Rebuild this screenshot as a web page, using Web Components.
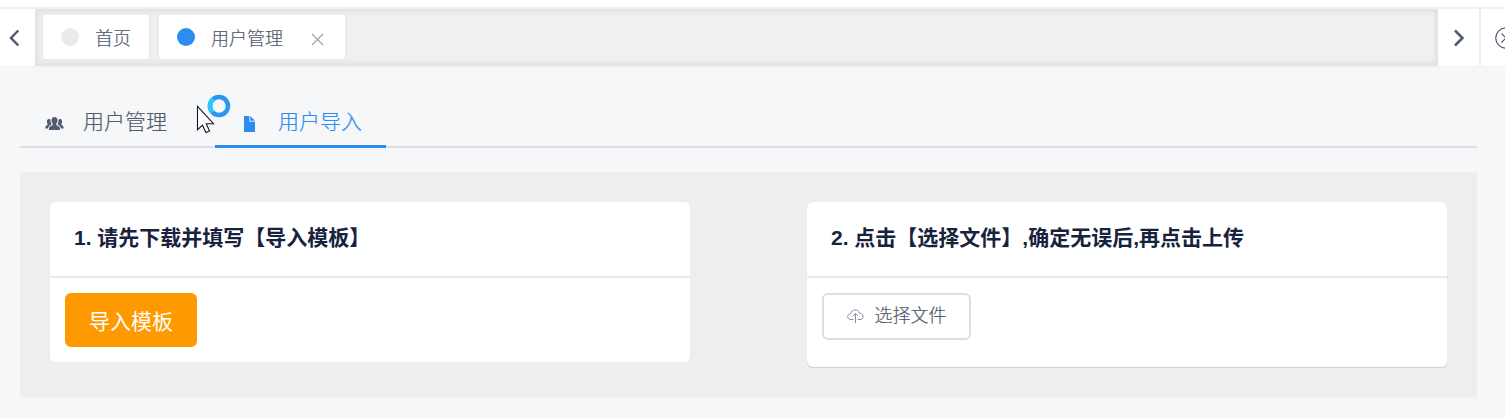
<!DOCTYPE html>
<html lang="zh-CN">
<head>
<meta charset="utf-8">
<title>用户管理</title>
<style>
html,body{margin:0;height:418px;overflow:hidden}
body{background:#f5f7f9;font-family:"Liberation Sans","Noto Sans CJK SC",sans-serif;color:#515a6e}
</style>
</head>
<body>
<user-page></user-page>
<script>
const define = (name, html) => customElements.define(name, class extends HTMLElement {
  constructor() {
    super();
    const t = document.createElement('template');
    t.innerHTML = html;
    this.attachShadow({ mode: 'open' }).append(t.content.cloneNode(true));
  }
});

define('tag-item', `<style>
:host{display:flex;align-items:center;box-sizing:border-box;height:48px;border:2px solid #e8eaec;border-radius:4px;background:#fff;padding:0 18px;font-size:18px;font-weight:300;white-space:nowrap;flex:none;-webkit-text-stroke:.2px}
i{width:18px;height:18px;border-radius:50%;background:var(--dot,#e8eaec);margin:0 16px 0 0}
span{line-height:26px;padding-top:4px}
svg{display:none;margin:4px 0 0 28px}
:host([closable]) svg{display:block}
:host([closable]){padding-right:21px}
</style><i></i><span><slot></slot></span><svg width="13" height="13" viewBox="0 0 13 13" fill="none" stroke="#a3a3a3" stroke-width="1.2"><path d="M1 1l11 11M12 1L1 12"/></svg>`);

define('tags-nav', `<style>
:host{display:flex;height:57px;border-top:2px solid #f0f0f0;border-bottom:1px solid #f0f0f0;background:#fff;margin-top:7px}
.btn{display:flex;align-items:center;flex:none;box-sizing:border-box}
.left{width:35px;padding-left:8.5px}.right{width:43px;padding-left:14.5px;border-right:2px solid #f0f0f0}
.close{width:24px;padding-left:14px;overflow:hidden}
.btn svg{flex:none}
.scroll{flex:1;display:flex;gap:6px;padding:4px 6px;background:#f0f0f0;box-shadow:inset 0 0 4px 3px rgba(100,100,100,.1);box-sizing:border-box}
</style>
<div class="btn left"><svg width="11" height="18" viewBox="0 0 11 18" fill="none" stroke="#515a6e" stroke-width="2.5"><path d="M9.3 1.5L2 9l7.3 7.5"/></svg></div>
<div class="scroll"><tag-item>首页</tag-item><tag-item closable style="--dot:#2d8cf0">用户管理</tag-item></div>
<div class="btn right"><svg width="12" height="18" viewBox="0 0 12 18" fill="none" stroke="#515a6e" stroke-width="2.5"><path d="M2 1.5L9.5 9 2 16.5"/></svg></div>
<div class="btn close"><svg width="22" height="22" viewBox="0 0 22 22" fill="none" stroke="#515a6e" stroke-width="1.1"><circle cx="11" cy="11" r="10.2"/><path d="M6.5 6.5l9 9M15.5 6.500l-9 9"/></svg></div>`);

define('tab-item', `<style>
:host{display:flex;align-items:center;box-sizing:border-box;height:51px;padding:0 24px;font-size:21px;font-weight:300;white-space:nowrap;border-bottom:3px solid transparent;-webkit-text-stroke:.2px}
:host([active]){color:#2d8cf0;border-color:#2d8cf0}
slot[name=icon]{display:block;flex:none}
span{line-height:30px;padding-top:2px}
</style><slot name="icon"></slot><span><slot></slot></span>`);

define('tab-bar', `<style>
:host{display:flex;height:51px;box-sizing:border-box;box-shadow:inset 0 -2px #dcdee2;margin:0 28px 0 20px}
svg{display:block}
</style>
<tab-item style="width:171px;margin-right:24px">
<svg slot="icon" width="21" height="15" viewBox="0 0 21 15" fill="#515a6e" style="margin:4px 18px 0 0"><path d="M10.500 1c2 0 3 1.300 3 3.200 0 1.500-.5 2.700-1.300 3.600v1c.4 1 3.800 1 3.800 4V14H5v-1.200c0-3 3.400-3 3.800-4v-1c-.8-.9-1.300-2.100-1.300-3.600C7.500 2.300 8.500 1 10.500 1z"/><path d="M4.700 3c.8 0 1.500.3 1.800 1 0 2 .3 3.200 1.200 4.300-.8 1-3.200 1.200-3.600 4.200H1.300c0-2.600 1.300-3.100 2.300-3.700V8C2.600 7.200 2.500 3 4.700 3zM16.300 3c-.8 0-1.500.3-1.800 1 0 2-.3 3.200-1.200 4.300.8 1 3.200 1.200 3.600 4.200h2.800c0-2.600-1.300-3.100-2.300-3.700V8c1-.8 1.100-5-1.100-5z"/></svg>用户管理</tab-item>
<tab-item active style="width:171px">
<svg slot="icon" width="12" height="16" viewBox="0 0 12 16" fill="#2d8cf0" style="margin:5px 22px 0 5px"><path d="M0 0h5v6h6v10H0zM6.300 0L11 4.800H6.300z"/><path d="M4.500 0h1.300v5.300H11V6H4.500z" opacity=".5"/></svg>用户导入</tab-item>`);

define('step-card', `<style>
:host{display:block;width:640px;background:#fff;border-radius:6px}
header{height:53px;padding:21px 24px 0;border-bottom:2px solid #e8eaec;font-size:21px;line-height:30px;font-weight:700;color:#17233d;white-space:nowrap}
div{padding:15px}
</style><header><slot name="title"></slot></header><div><slot></slot></div>`);

define('action-button', `<style>
:host{display:flex;align-items:center;justify-content:center;box-sizing:border-box;width:132px;height:54px;border-radius:6px;background:#f90;color:#fff;font-size:21px;font-weight:400}
:host([outline]){width:149px;height:47px;background:#fff;border:2px solid #dcdee2;color:#515a6e;font-size:18px;font-weight:300;-webkit-text-stroke:.2px}
span{line-height:28px;padding-top:3px}
:host([outline]) span{padding:0 0 2px}
</style><slot name="icon"></slot><span><slot></slot></span>`);

define('busy-cursor', `<style>
:host{position:absolute;left:196px;top:93px;pointer-events:none}
svg{display:block}
</style><svg width="38" height="42" viewBox="0 0 38 42"><path d="M1.500 13.500v23.200l5-4.500 3.400 7.300 3.600-1.600-3.300-7.200h7.300z" fill="#fff" stroke="#161622" stroke-width="1.100"/><circle cx="23" cy="13" r="9" fill="none" stroke="#2b95f1" stroke-width="4.500"/><path d="M16.600 19.400A9 9 0 0 1 17.500 5.900" fill="none" stroke="#2cc8fb" stroke-width="4.500"/></svg>`);

define('user-page', `<style>
:host{display:block;background:#f5f7f9}
.top{background:#fff;overflow:hidden}
tab-bar{margin-top:30px}
main{display:flex;justify-content:space-between;align-items:flex-start;box-sizing:border-box;height:225px;margin:24px 28px 0 20px;padding:30px;background:#eee}
.second{height:165px;box-shadow:0 1px 1px rgba(0,0,0,.14)}
</style>
<div class="top"><tags-nav></tags-nav></div>
<tab-bar></tab-bar>
<main>
<step-card><span slot="title">1. 请先下载并填写【导入模板】</span><action-button>导入模板</action-button></step-card>
<step-card class="second"><span slot="title">2. 点击【选择文件】,确定无误后,再点击上传</span>
<action-button outline><svg slot="icon" style="margin-right:11px" width="17" height="15" viewBox="0 0 17 15" fill="none" stroke="#7d8494" stroke-width=".9"><path d="M6.500 10.500H4C-.3 10.500-.3 5 3.700 4.800 4.600-.2 11.400-.6 12.500 4.300c4.800.1 4.800 6.200.5 6.200h-2.500M8.500 14V4.500M5.800 7.200l2.700-2.700 2.700 2.700"/></svg>选择文件</action-button></step-card>
</main>
<busy-cursor></busy-cursor>`);
</script>
</body>
</html>
